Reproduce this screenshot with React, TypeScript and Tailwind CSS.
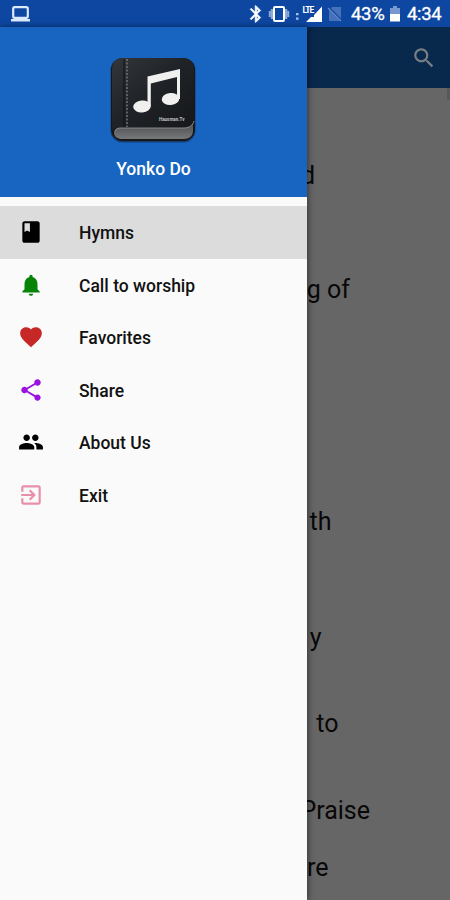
import React from "react";

const PATHS = {
  book: "M18 2H6c-1.1 0-2 .9-2 2v16c0 1.1.9 2 2 2h12c1.1 0 2-.9 2-2V4c0-1.1-.9-2-2-2zM6 4h5v8l-2.5-1.5L6 12V4z",
  bell: "M12 22c1.1 0 2-.9 2-2h-4c0 1.1.89 2 2 2zm6-6v-5c0-3.07-1.64-5.64-4.5-6.32V4c0-.83-.67-1.5-1.5-1.5s-1.5.67-1.5 1.5v.68C7.63 5.36 6 7.92 6 11v5l-2 2v1h16v-1l-2-2z",
  heart: "M12 21.35l-1.45-1.32C5.4 15.36 2 12.28 2 8.5 2 5.42 4.42 3 7.5 3c1.74 0 3.41.81 4.5 2.09C13.09 3.81 14.76 3 16.5 3 19.58 3 22 5.42 22 8.5c0 3.78-3.4 6.86-8.55 11.54L12 21.35z",
  share: "M18 16.08c-.76 0-1.44.3-1.96.77L8.91 12.7c.05-.23.09-.46.09-.7s-.04-.47-.09-.7l7.05-4.11c.54.5 1.25.81 2.04.81 1.66 0 3-1.34 3-3s-1.34-3-3-3-3 1.34-3 3c0 .24.04.47.09.7L8.04 9.81C7.5 9.31 6.79 9 6 9c-1.66 0-3 1.34-3 3s1.34 3 3 3c.79 0 1.5-.31 2.04-.81l7.12 4.16c-.05.21-.08.43-.08.65 0 1.61 1.31 2.92 2.92 2.92s2.92-1.31 2.92-2.92-1.31-2.92-2.92-2.92z",
  exit: "M10.09 15.59L11.5 17l5-5-5-5-1.41 1.41L12.67 11H3v2h9.67l-2.58 2.59zM19 3H5c-1.11 0-2 .9-2 2v4h2V5h14v14H5v-4H3v4c0 1.1.89 2 2 2h14c1.1 0 2-.9 2-2V5c0-1.1-.9-2-2-2z",
  people: "M16 11c1.66 0 2.99-1.34 2.99-3S17.66 5 16 5c-1.66 0-3 1.34-3 3s1.34 3 3 3zm-8 0c1.66 0 2.99-1.34 2.99-3S9.66 5 8 5C6.34 5 5 6.34 5 8s1.34 3 3 3zm0 2c-2.33 0-7 1.17-7 3.5V19h14v-2.5c0-2.33-4.67-3.5-7-3.5zm8 0c-.29 0-.62.02-.97.05 1.16.84 1.97 1.97 1.97 3.45V19h6v-2.5c0-2.33-4.67-3.5-7-3.5z",
  bluetooth: "M17.71 7.71L12 2h-1v7.59L6.41 5 5 6.41 10.59 12 5 17.59 6.41 19 11 14.41V22h1l5.71-5.71-4.3-4.29 4.3-4.29zM13 5.83l1.88 1.88L13 9.59V5.83zm1.88 10.46L13 18.17v-3.76l1.88 1.88z",
  search: "M15.5 14h-.79l-.28-.27C15.41 12.59 16 11.11 16 9.5 16 5.91 13.09 3 9.5 3S3 5.91 3 9.5 5.91 16 9.5 16c1.61 0 3.09-.59 4.23-1.57l.27.28v.79l5 4.99L20.49 19l-4.99-5zm-6 0C7.01 14 5 11.99 5 9.5S7.01 5 9.5 5 14 7.01 14 9.5 11.99 14 9.5 14z",
};

function Icon({ name, className }: { name: keyof typeof PATHS; className: string }) {
  return (
    <svg viewBox="0 0 24 24" fill="currentColor" className={`shrink-0 ${className}`}>
      <path d={PATHS[name]} />
    </svg>
  );
}

function StatusBar() {
  return (
    <header className="flex h-[27px] shrink-0 items-center bg-[#0d47a1] pl-[10px] text-white">
      <svg viewBox="0 0 20 16" className="h-[16px] w-[20px] shrink-0">
        <rect x="3.200" y="1.200" width="14.600" height="10.600" rx="1.500" fill="none" stroke="#dce8fb" strokeWidth="2.200" />
        <path d="M1 13h19v2.500H1z" fill="#dce8fb" />
      </svg>
      <svg viewBox="0 0 24 24" className="ml-[216px] size-[20px] shrink-0" fill="white" stroke="white" strokeWidth="0.7">
        <path d={PATHS.bluetooth} />
      </svg>
      <svg viewBox="0 0 22 18" className="ml-[2px] h-[18px] w-[22px] shrink-0">
        <path d="M4 4v10M18 4v10" stroke="#8eaad8" strokeWidth="2.5" />
        <path d="M1.800 6v6M20.200 6v6" stroke="#8eaad8" strokeWidth="2" />
        <rect x="6" y="2" width="10" height="14" rx="1" fill="#0d47a1" stroke="white" strokeWidth="2" />
      </svg>
      <svg viewBox="0 0 28 20" className="ml-[5px] h-[20px] w-[28px] shrink-0">
        <path d="M1 9h2.500v2.200H1zM1 13.500h2.500v2.200H1z" fill="#a9c0e6" />
        <path d="M27 2.500v15.500H11l5-5h3v-2l1-1z" fill="white" />
        <text x="7.500" y="8.500" fontFamily="Roboto, sans-serif" fontWeight="700" fontSize="8.500" letterSpacing="-1" fill="white">LTE</text>
      </svg>
      <svg viewBox="0 0 16 18" className="ml-[4px] h-[18px] w-[16px] shrink-0">
        <path d="M5 2h9v14H2V5z" fill="#4672ba" />
        <path d="M1 2l14 14" stroke="#0d47a1" strokeWidth="2.4" />
        <path d="M1 3l13 13" stroke="#6388c6" strokeWidth="1.3" />
      </svg>
      <span className="ml-[8px] w-[36px] pt-[2px] text-[18.5px] leading-[25px] tracking-[-0.3px] whitespace-nowrap [-webkit-text-stroke:0.3px_white]">43%</span>
      <svg viewBox="0 0 10 16" className="ml-[3px] h-[16px] w-[10px] shrink-0">
        <path d="M3 0h4v2h3v7H0V2h3z" fill="#7899d0" />
        <path d="M0 8h10v7.500H0z" fill="white" />
      </svg>
      <span className="ml-[7px] pt-[2px] text-[18.5px] leading-[25px] tracking-[-0.3px] whitespace-nowrap [-webkit-text-stroke:0.3px_white]">4:34</span>
    </header>
  );
}

function AppLogo() {
  return (
    <svg viewBox="0 0 88 88" className="mr-[2px] h-[88px] w-[88px]">
      <defs>
        <linearGradient id="cover" x1="0" y1="0" x2="1" y2="1">
          <stop offset="0" stopColor="#34373a" />
          <stop offset="0.45" stopColor="#202327" />
          <stop offset="1" stopColor="#15171a" />
        </linearGradient>
        <linearGradient id="pages" x1="0" y1="0" x2="0" y2="1">
          <stop offset="0" stopColor="#4b4c4e" />
          <stop offset="1" stopColor="#77787a" />
        </linearGradient>
      </defs>
      <rect x="1.500" y="2" width="85" height="84.500" rx="12" fill="#173d70" />
      <rect x="2" y="2" width="84" height="83" rx="12" fill="#151719" />
      <path d="M10 72H70c8 0 12-2 14-5v8c0 5-4 8-9 8H13c-9 0-11-10-3-11z" fill="url(#pages)" />
      <path d="M14 2h59c8 0 12 5 12 12v49c0 6-4 8.500-10 8.500H11c-4 0-7 1-8 4V14C3 6 7 2 14 2z" fill="url(#cover)" />
      <path d="M6 75c1-2.500 3-3 6-3h63c5 0 9-2.500 10-7" fill="none" stroke="#909294" strokeWidth="0.900" />
      <path d="M18 3v68" stroke="#777a7c" strokeWidth="1.400" strokeDasharray="2 1.500" />
      <path d="M15 3v68" stroke="#111315" strokeWidth="1" />
      <g fill="#f0f0ee">
        <ellipse cx="33" cy="50.500" rx="8.800" ry="6" transform="rotate(-5 33 50.500)" />
        <ellipse cx="61.500" cy="43" rx="8.800" ry="6" transform="rotate(-5 61.500 43)" />
        <path d="M38.500 20.500L71 13v30h-3V21L41.800 27.500v23h-3.300z" />
      </g>
      <text x="50" y="64.500" fontSize="4.500" fontFamily="Roboto, sans-serif" fontWeight="700" fill="#c2c4c6">Hausman.Tv</text>
    </svg>
  );
}

const items: { label: string; icon: keyof typeof PATHS; color: string; active?: boolean }[] = [
  { label: "Hymns", icon: "book", color: "text-black", active: true },
  { label: "Call to worship", icon: "bell", color: "text-[#078407]" },
  { label: "Favorites", icon: "heart", color: "text-[#c62828]" },
  { label: "Share", icon: "share", color: "text-[#9912df]" },
  { label: "About Us", icon: "people", color: "text-black" },
  { label: "Exit", icon: "exit", color: "text-[#e88fa9]" },
];

function Drawer() {
  return (
    <aside className="z-10 flex w-[307px] shrink-0 flex-col bg-[#fafafa] shadow-[1px_0_6px_rgba(0,0,0,0.5)]">
      <div className="flex h-[170px] shrink-0 flex-col items-center bg-[#1765c0] pt-[29px]">
        <AppLogo />
        <span className="mt-[13px] text-[17.5px] leading-[24px] font-medium text-white">Yonko Do</span>
      </div>
      <nav className="pt-[9px]">
        {items.map((item) => (
          <div
            key={item.label}
            className={`flex h-[52.5px] items-center pl-[18px] ${item.active ? "bg-[#dcdcdc]" : ""}`}
          >
            <Icon name={item.icon} className={`size-[26px] ${item.color}`} />
            <span className="ml-[35px] pt-[2px] text-[17.5px] leading-[24px] font-medium text-[#111]">{item.label}</span>
          </div>
        ))}
      </nav>
    </aside>
  );
}

const lyricEnds = [
  { text: "d", place: "mt-[73px] w-[8px]" },
  { text: "g of", place: "mt-[85px] w-[43px]" },
  { text: "th", place: "mt-[203px] w-[24.5px]" },
  { text: "y", place: "mt-[87px] w-[14.5px]" },
  { text: "to", place: "mt-[57px] w-[31.5px]" },
  { text: "Praise", place: "mt-[58px] w-[63px]" },
  { text: "re", place: "mt-[28px] w-[21.5px]" },
];

function Content() {
  return (
    <main className="flex min-w-0 flex-1 flex-col bg-[#666]">
      <div className="flex h-[61px] shrink-0 items-center justify-end bg-[#08284c] pr-[13px]">
        <Icon name="search" className="size-[26px] text-[#777e86]" />
      </div>
      <div className="flex flex-1 justify-between">
        <div className="flex flex-col">
          {lyricEnds.map((line) => (
            <div key={line.text} className={`flex h-[29px] shrink-0 items-center justify-end ${line.place}`}>
              <span className="text-[25px] leading-[29px] whitespace-nowrap text-[#080808]">{line.text}</span>
            </div>
          ))}
        </div>
        <div className="h-[12px] w-[3px] bg-[#585858]" />
      </div>
    </main>
  );
}

export default function App() {
  return (
    <div className="flex h-[900px] w-[450px] flex-col overflow-hidden font-['Roboto',sans-serif]">
      <StatusBar />
      <div className="flex min-h-0 flex-1">
        <Drawer />
        <Content />
      </div>
    </div>
  );
}
